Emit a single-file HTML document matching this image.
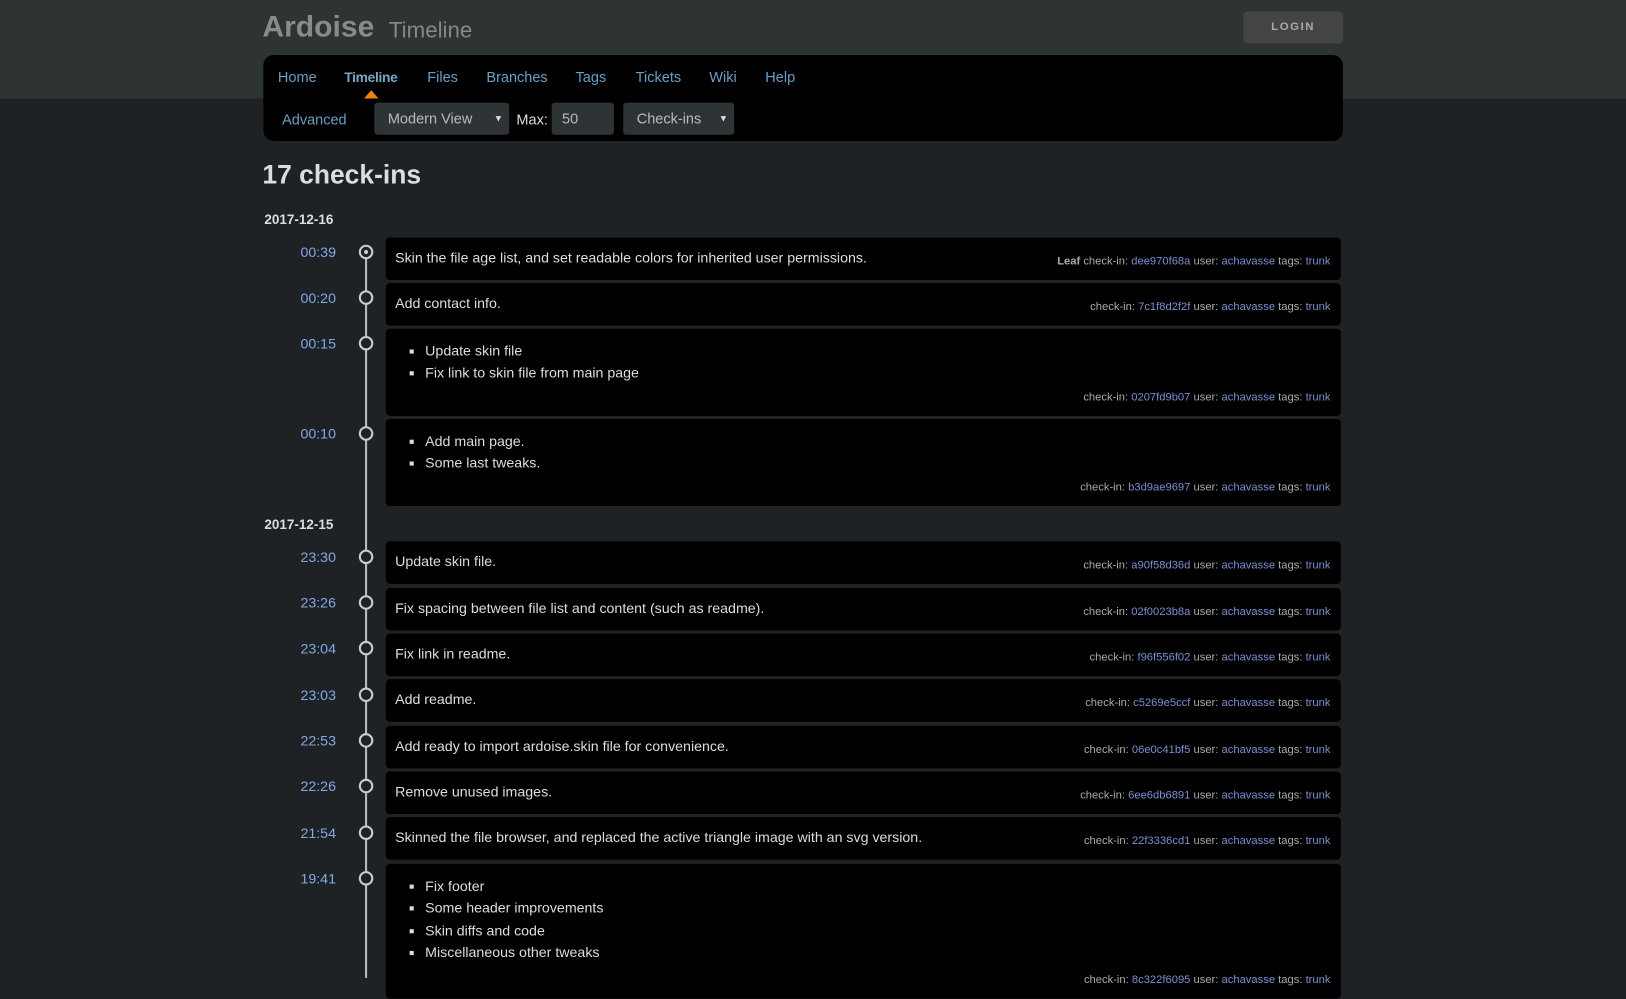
<!DOCTYPE html>
<html><head><meta charset="utf-8"><style>
html,body{margin:0;padding:0;background:#1f2224;width:1626px;height:974px;overflow:hidden}
#w{position:absolute;left:0;top:0;width:1568px;height:940px;transform:scale(1.0370);transform-origin:0 0;font-family:"Liberation Sans",sans-serif}
.band{position:absolute;left:0;top:0;width:1568px;height:95px;background:#2e3434}
.a{position:absolute;white-space:nowrap}
.nav{position:absolute;left:254px;top:53px;width:1041px;height:83px;background:#000;border-radius:10px}
.nl{position:absolute;top:66px;font-size:14px;color:#6a9fc4}
.sel{position:absolute;top:99px;height:31px;background:#2e3335;border-radius:3px;color:#bbb;font-size:14px;line-height:31px;padding-left:13px;box-sizing:border-box}
.sel i{position:absolute;right:6px;top:0;font-style:normal;font-size:9px;color:#ddd}
.box{position:absolute;left:372px;width:921px;background:#000;border-radius:4px;color:#ddd;font-size:13.7px}
.box .t{position:absolute;left:9px;top:12px}
.box ul{margin:0;padding:0 0 0 38px;position:absolute;top:11px;line-height:21.3px;list-style:square}
.meta{position:absolute;right:10px;bottom:12px;font-size:10.8px;color:#aaa}
.meta a{color:#7b8fd0}
.tm{position:absolute;left:260px;width:64px;text-align:right;font-size:13.7px;color:#82a8e6}
.c{position:absolute;left:346px;width:10px;height:10px;border:2px solid #ccc;border-radius:50%;background:#1f2224}
.dt{position:absolute;left:255px;font-size:13px;font-weight:bold;color:#ddd}
</style></head><body><div id="w">
<div class="band"></div>
<div class="a" style="left:253px;top:10px;font-size:29px;font-weight:bold;color:#8a8a8a">Ardoise</div>
<div class="a" style="left:375px;top:17px;font-size:21.5px;color:#888">Timeline</div>
<div class="a" style="left:1199px;top:11px;width:96px;height:31px;background:#444;border-radius:4px;color:#aaa;font-size:11px;font-weight:bold;letter-spacing:1.5px;text-align:center;line-height:31px">LOGIN</div>
<div class="nav"></div>
<div class="nl" style="left:268px">Home</div>
<div class="nl" style="left:332px;font-weight:bold;color:#7aa6c6;font-size:13.3px;letter-spacing:-0.3px;top:67px">Timeline</div>
<div class="a" style="left:351px;top:87px;width:0;height:0;border-left:7px solid transparent;border-right:7px solid transparent;border-bottom:8px solid #f0820f"></div>
<div class="nl" style="left:412px">Files</div>
<div class="nl" style="left:469px">Branches</div>
<div class="nl" style="left:555px">Tags</div>
<div class="nl" style="left:613px">Tickets</div>
<div class="nl" style="left:684px">Wiki</div>
<div class="nl" style="left:738px">Help</div>
<div class="nl" style="left:272px;top:107px">Advanced</div>
<div class="sel" style="left:361px;width:130px">Modern View<i>▼</i></div>
<div class="a" style="left:498px;top:107px;font-size:14px;color:#ddd">Max:</div>
<div class="sel" style="left:532px;width:60px;padding-left:10px">50</div>
<div class="sel" style="left:601px;width:107px">Check-ins<i>▼</i></div>
<div class="a" style="left:253px;top:155px;font-size:25.5px;font-weight:bold;color:#ddd">17 check-ins</div>
<div class="dt" style="top:204px">2017-12-16</div>
<div class="dt" style="top:498px">2017-12-15</div>
<div class="a" style="left:352px;top:243px;width:2px;height:700px;background:#bbb"></div>

<div class="tm" style="top:236px">00:39</div><div class="c" style="top:236px"></div><div class="a" style="left:351px;top:241px;width:4px;height:4px;border-radius:50%;background:#ccc"></div>
<div class="box" style="top:229px;height:41px"><div class="t">Skin the file age list, and set readable colors for inherited user permissions.</div><div class="meta"><b>Leaf</b> check-in: <a>dee970f68a</a> user: <a>achavasse</a> tags: <a>trunk</a></div></div>

<div class="tm" style="top:280px">00:20</div><div class="c" style="top:280px"></div>
<div class="box" style="top:273px;height:41px"><div class="t">Add contact info.</div><div class="meta">check-in: <a>7c1f8d2f2f</a> user: <a>achavasse</a> tags: <a>trunk</a></div></div>

<div class="tm" style="top:324px">00:15</div><div class="c" style="top:324px"></div>
<div class="box" style="top:317px;height:84px"><ul><li>Update skin file</li><li>Fix link to skin file from main page</li></ul><div class="meta">check-in: <a>0207fd9b07</a> user: <a>achavasse</a> tags: <a>trunk</a></div></div>

<div class="tm" style="top:411px">00:10</div><div class="c" style="top:411px"></div>
<div class="box" style="top:404px;height:84px"><ul><li>Add main page.</li><li>Some last tweaks.</li></ul><div class="meta">check-in: <a>b3d9ae9697</a> user: <a>achavasse</a> tags: <a>trunk</a></div></div>

<div class="tm" style="top:530px">23:30</div><div class="c" style="top:530px"></div>
<div class="box" style="top:522px;height:41px"><div class="t">Update skin file.</div><div class="meta">check-in: <a>a90f58d36d</a> user: <a>achavasse</a> tags: <a>trunk</a></div></div>

<div class="tm" style="top:574px">23:26</div><div class="c" style="top:574px"></div>
<div class="box" style="top:567px;height:41px"><div class="t">Fix spacing between file list and content (such as readme).</div><div class="meta">check-in: <a>02f0023b8a</a> user: <a>achavasse</a> tags: <a>trunk</a></div></div>

<div class="tm" style="top:618px">23:04</div><div class="c" style="top:618px"></div>
<div class="box" style="top:611px;height:41px"><div class="t">Fix link in readme.</div><div class="meta">check-in: <a>f96f556f02</a> user: <a>achavasse</a> tags: <a>trunk</a></div></div>

<div class="tm" style="top:663px">23:03</div><div class="c" style="top:663px"></div>
<div class="box" style="top:655px;height:41px"><div class="t">Add readme.</div><div class="meta">check-in: <a>c5269e5ccf</a> user: <a>achavasse</a> tags: <a>trunk</a></div></div>

<div class="tm" style="top:707px">22:53</div><div class="c" style="top:707px"></div>
<div class="box" style="top:700px;height:41px"><div class="t">Add ready to import ardoise.skin file for convenience.</div><div class="meta">check-in: <a>06e0c41bf5</a> user: <a>achavasse</a> tags: <a>trunk</a></div></div>

<div class="tm" style="top:751px">22:26</div><div class="c" style="top:751px"></div>
<div class="box" style="top:744px;height:41px"><div class="t">Remove unused images.</div><div class="meta">check-in: <a>6ee6db6891</a> user: <a>achavasse</a> tags: <a>trunk</a></div></div>

<div class="tm" style="top:796px">21:54</div><div class="c" style="top:796px"></div>
<div class="box" style="top:788px;height:41px"><div class="t">Skinned the file browser, and replaced the active triangle image with an svg version.</div><div class="meta">check-in: <a>22f3336cd1</a> user: <a>achavasse</a> tags: <a>trunk</a></div></div>

<div class="tm" style="top:840px">19:41</div><div class="c" style="top:840px"></div>
<div class="box" style="top:833px;height:130px"><ul><li>Fix footer</li><li>Some header improvements</li><li>Skin diffs and code</li><li>Miscellaneous other tweaks</li></ul><div class="meta">check-in: <a>8c322f6095</a> user: <a>achavasse</a> tags: <a>trunk</a></div></div>
</div></body></html>
